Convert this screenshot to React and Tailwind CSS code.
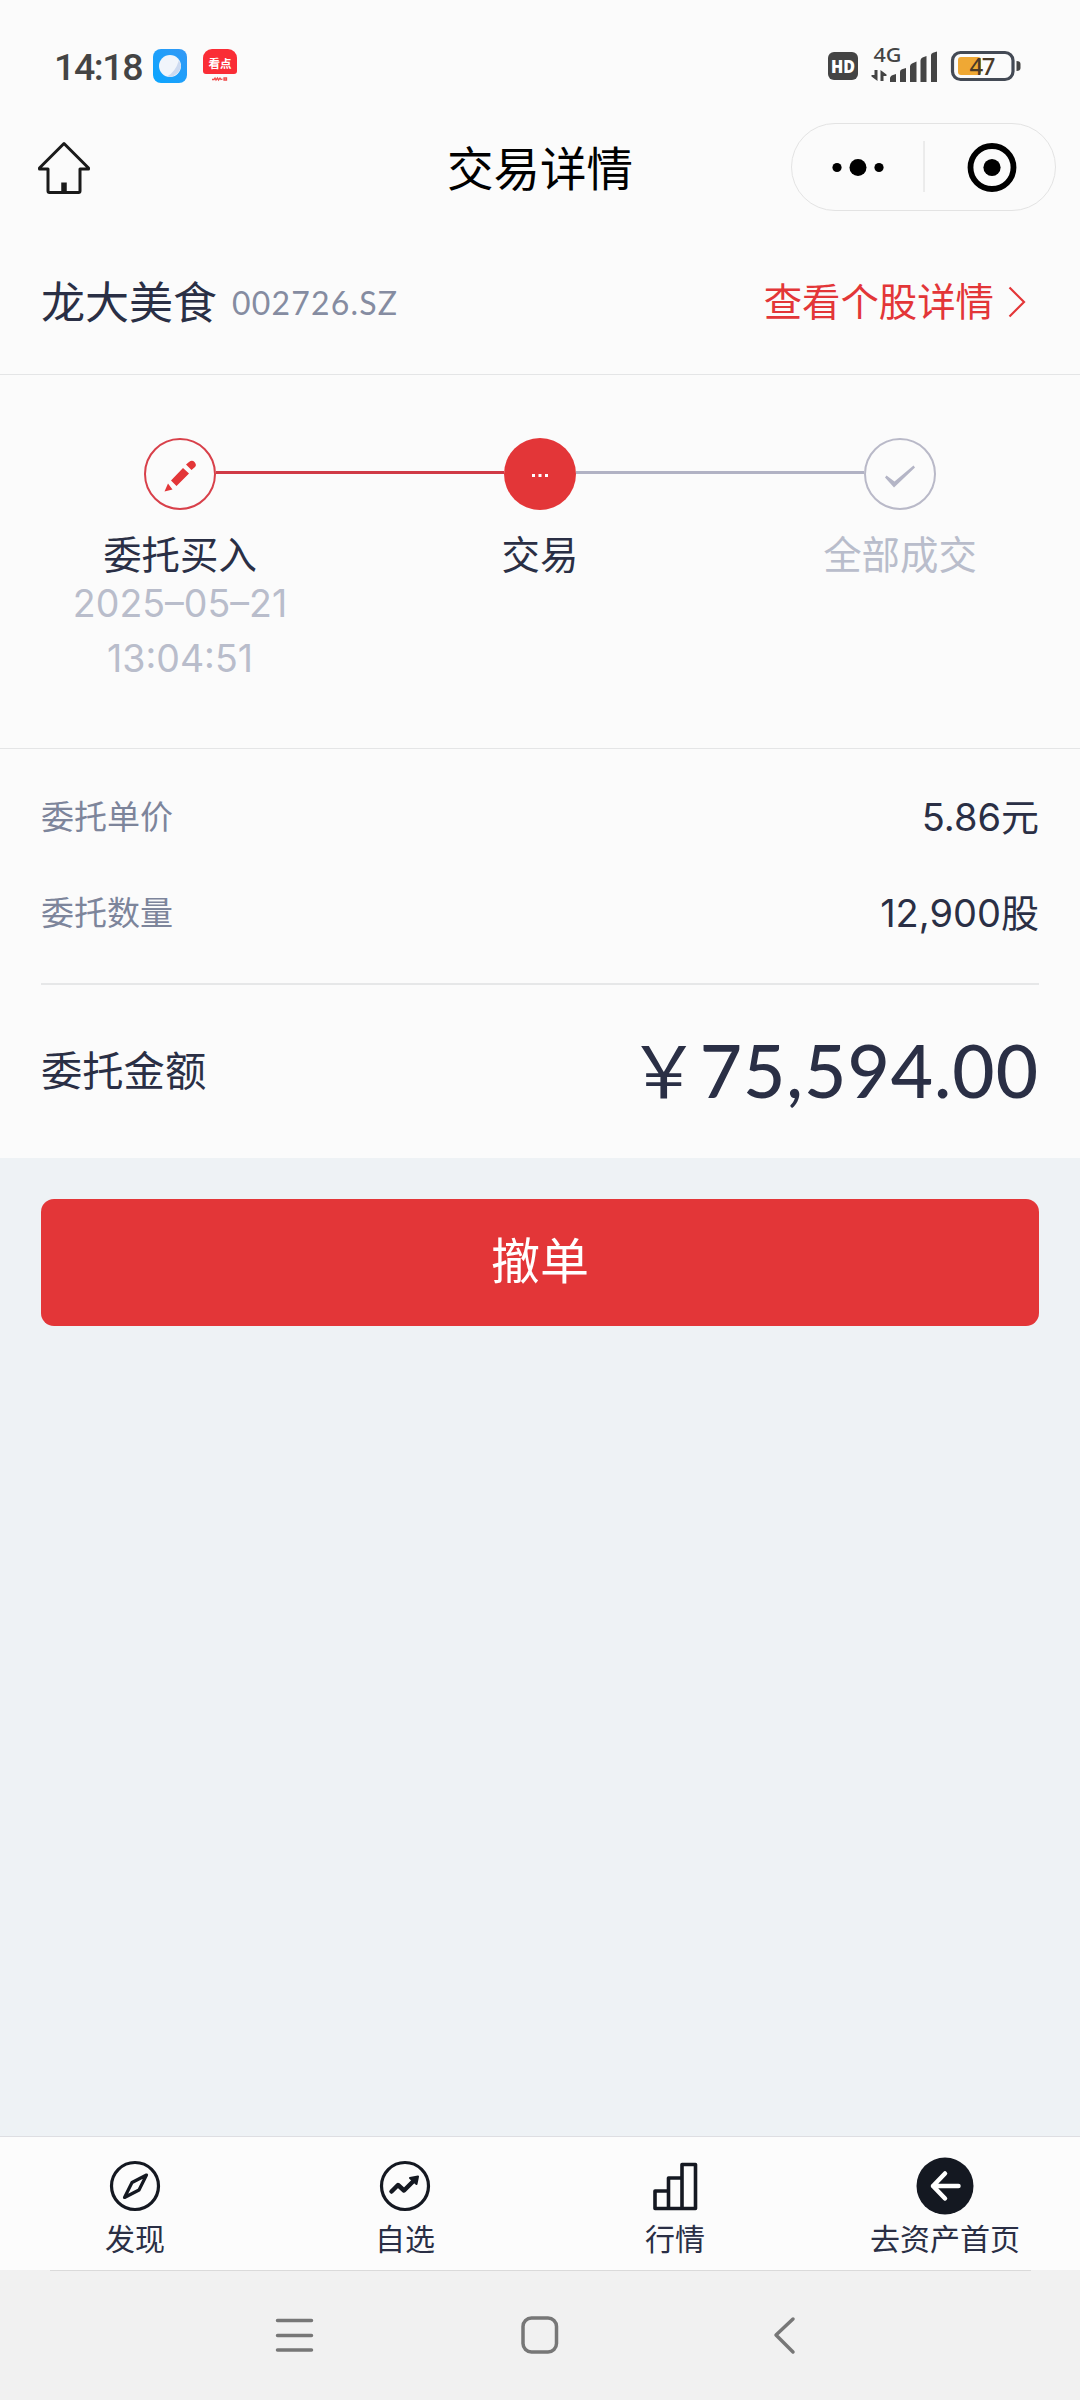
import React from "react";

const steps = [
  { label: "委托买入", time: ["2025–05–21", "13:04:51"], state: "done" },
  { label: "交易", state: "active" },
  { label: "全部成交", state: "pending" },
];

const rows = [
  { label: "委托单价", value: "5.86", unit: "元" },
  { label: "委托数量", value: "12,900", unit: "股" },
];

function StatusBar() {
  return (
    <div className="h-[112px] pl-[54px] pr-[59px] pt-[40px] flex items-start justify-between text-[#444]">
      <div className="flex items-start pt-[6px]">
        <span className="w-[99px] h-[40px] leading-[43px] text-[37.500px] font-medium tracking-[-1.400px] font-['Roboto',sans-serif] whitespace-nowrap">14:18</span>
        <svg width="34" height="34" viewBox="0 0 34 34" className="mt-[3px]">
          <defs>
            <linearGradient id="sky" x1="0" y1="1" x2="1" y2="0">
              <stop offset="0" stopColor="#0aa6ff" />
              <stop offset="1" stopColor="#3498f5" />
            </linearGradient>
          </defs>
          <rect width="34" height="34" rx="8" fill="url(#sky)" />
          <circle cx="17" cy="17" r="11" fill="#f1f5fb" />
          <path d="M26 11l2 6q-1.500 9-11 11l-3-.5Q22.500 23 26 11Z" fill="#cddaf0" />
        </svg>
        <div className="ml-[16px] mt-[3px] w-[34px] h-[34px] flex flex-col items-center">
          <div className="w-[34px] h-[25px] rounded-t-[9px] rounded-b-[3px] bg-[#fa2d36] text-white text-[11.500px] font-bold leading-[29px] text-center">看点</div>
          <svg width="16" height="6" viewBox="0 0 16 6" className="mt-[2px]">
            <path d="M0 3.500h2l1-1.500 1 2 1.500-2 1 2 1.500-2 1 1.500 1.500-.5M12 2h2.500v2H12z" fill="none" stroke="#f04a4a" strokeWidth="1.300" />
          </svg>
        </div>
      </div>
      <svg width="193" height="50" viewBox="828 40 193 50" fill="#444">
        <rect x="828" y="52" width="30" height="28" rx="6" />
        <text x="843" y="72.500" textAnchor="middle" fill="#fff" fontSize="17.500" fontWeight="800" fontFamily="Open Sans, sans-serif" textLength="24" lengthAdjust="spacingAndGlyphs">HD</text>
        <text x="873.500" y="62" fontSize="20.500" fontWeight="500" fontFamily="Noto Sans, sans-serif" textLength="28" lengthAdjust="spacingAndGlyphs">4G</text>
        <path d="M877.500 70v11l-6-4.500V75h3v-5zM880.500 70l6 4.500V76h-3v5h-3z" />
        <path d="M890 82v-3.500q0-2.500 3-3.500l3-1v8zM900 82v-10q0-2 2-2.700l4-1.300v14zM910 82V66.500q0-2 2-3l4.500-2v20.500zM920.500 82V60.500q0-2 2-3l4-1.500v26zM931 82V55q0-1.500 2-2.300l4-1.200v30.500z" />
        <rect x="952.500" y="52.500" width="60.500" height="27" rx="8" fill="none" stroke="#444a55" strokeWidth="3.200" />
        <rect x="958" y="57" width="23" height="18" rx="3" fill="#efa834" />
        <path d="M1016.500 61q4 0 4 3v4q0 3-4 3z" />
        <text x="969.500" y="75" fontSize="24" fontWeight="500" fontFamily="Noto Sans, sans-serif" textLength="26" fill="#4a3a28">47</text>
      </svg>
    </div>
  );
}

function TitleBar() {
  return (
    <div className="h-[118px] flex items-start justify-between pl-[37px] pr-[24px] text-black">
      <svg width="54" height="54" viewBox="0 0 54 54" fill="none" stroke="#1a1a1a" strokeWidth="3" strokeLinejoin="round" className="mt-[29px]">
        <path d="M27 2.500 2.500 27v1h8.500V50q0 1.500 1.500 1.500h29q1.500 0 1.500-1.500V28h8.500v-1z" />
        <path d="M27 41.500V51" strokeWidth="5.500" />
      </svg>
      <h1 className="ml-[198px] mt-[24px] leading-[60px] text-[46.500px] font-normal">交易详情</h1>
      <svg width="265" height="90" viewBox="0 0 265 90" className="mt-[10px]">
        <rect x=".5" y="1.500" width="264" height="87" rx="43.500" fill="none" stroke="#e3e3e3" />
        <path d="M133 19v51" stroke="#dcdcdc" />
        <circle cx="46" cy="45.500" r="4.600" />
        <circle cx="67" cy="45.500" r="8.500" />
        <circle cx="88" cy="45.500" r="4.600" />
        <circle cx="201" cy="45.500" r="21.500" fill="none" stroke="#000" strokeWidth="5.800" />
        <circle cx="201" cy="45.500" r="8.600" />
      </svg>
    </div>
  );
}

function StepIcon({ state }) {
  if (state === "active") {
    return (
      <svg width="72" height="72" viewBox="0 0 72 72">
        <circle cx="36" cy="36" r="36" fill="#e33638" />
        <path d="M28 37.500h3M34.500 37.500h3M41 37.500h3" stroke="#fff" strokeWidth="3" />
      </svg>
    );
  }
  const done = state === "done";
  return (
    <svg width="72" height="72" viewBox="0 0 72 72">
      <circle cx="36" cy="36" r="35" fill="#fbfbfb" stroke={done ? "#d8404a" : "#b9b9c8"} strokeWidth="2" />
      {done ? (
        <g fill="#e33638">
          <path d="M20.500 53.500l3.500-8 4.500 6zM27 42.500 39 30l6 5.500L32.500 48zM42 26.500 45 24q3-2.500 5.500 0 2.500 3 .5 5L47.500 32z" />
        </g>
      ) : (
        <path d="M22.500 37.500 21 39.500 30 49.500 51 29.500 49.500 27.500 30.500 43.500z" fill="#b4b5c6" />
      )}
    </svg>
  );
}

function Steps() {
  return (
    <div className="h-[374px] pt-[63px] flex border-b border-[#e4e5e6]">
      {steps.map((step, i) => (
        <div key={step.label} className="flex-1 flex flex-col items-center">
          <div className="w-full flex items-center">
            <span className={`flex-1 h-[3px] -mt-[3px] ${i === 0 ? "" : i === 1 ? "bg-[#d03a46]" : "bg-[#b1b2c4]"}`}></span>
            <StepIcon state={step.state} />
            <span className={`flex-1 h-[3px] -mt-[3px] ${i === 0 ? "bg-[#d03a46]" : i === 1 ? "bg-[#b1b2c4]" : ""}`}></span>
          </div>
          <div className={`mt-[14px] leading-[56px] text-[38.400px] ${step.state === "pending" ? "text-[#b9bdcb]" : "text-[#2a2f45]"}`}>{step.label}</div>
          {step.time && (
            <div className="-mt-[4px] text-center text-[37.500px] leading-[55px] text-[#b9bdcb] font-normal font-['Inter',sans-serif]">
              {step.time.map((t) => <div key={t}>{t}</div>)}
            </div>
          )}
        </div>
      ))}
    </div>
  );
}

function Order() {
  return (
    <div className="h-[409px] px-[41px] pt-[20px] text-[#2a2f45]">
      {rows.map((row) => (
        <div key={row.label} className="h-[96px] flex items-center justify-between">
          <span className="text-[33px] text-[#7d859b] -mt-[2px]">{row.label}</span>
          <span className="text-[38px] flex items-center">
            <span className="text-[38px] font-['Inter',sans-serif]">{row.value}</span>
            <span className="-mt-[6px]">{row.unit}</span>
          </span>
        </div>
      ))}
      <div className="mt-[22px] h-[2px] bg-[#e6e7e8]"></div>
      <div className="h-[172px] flex items-center justify-between">
        <span className="text-[41.300px] -mt-[5px]">委托金额</span>
        <span className="-mt-[3px] flex items-center text-[72px] leading-[80px]">
          <span className="-mt-[5px]">￥</span>
          <span className="text-[73px] tracking-[1px] font-medium font-['Lato',sans-serif]">75,594.00</span>
        </span>
      </div>
    </div>
  );
}

const tabs = [
  {
    label: "发现",
    icon: (
      <>
        <circle cx="29" cy="29" r="23.500" />
        <path d="M40.500 18 26 25.500 18.500 40.500 33 33z" />
      </>
    ),
  },
  {
    label: "自选",
    icon: (
      <>
        <circle cx="29" cy="29" r="23.500" />
        <path d="M15.500 34.500l6.500-6.500 6 5.500L37.500 24" strokeWidth="4.500" />
        <path d="M34 21l8-1.500-1.500 7.500z" fill="#141821" strokeWidth="2" />
      </>
    ),
  },
  {
    label: "行情",
    icon: (
      <path d="M9 34h13.500v17.500H9zM22.500 21H36v30.500H22.500zM36 7.500h13.500v44H36z" strokeWidth="3.600" />
    ),
  },
  {
    label: "去资产首页",
    icon: (
      <>
        <circle cx="29" cy="29" r="28.500" fill="#141821" stroke="none" />
        <path d="M29 16.500 17 29l12 12.500M17 29h25.500" stroke="#fff" strokeWidth="4.500" />
      </>
    ),
  },
];

function TabBar() {
  return (
    <div className="h-[134px] bg-[#fcfcfc] border-t border-[#dedee2] flex">
      {tabs.map((tab) => (
        <div key={tab.label} className="flex-1 flex flex-col items-center pt-[20px] text-[#2a2f45]">
          <svg width="58" height="58" viewBox="0 0 58 58" fill="none" stroke="#141821" strokeWidth="3.200" strokeLinejoin="round" strokeLinecap="round">
            {tab.icon}
          </svg>
          <span className="mt-[2px] text-[30px] leading-[40px]">{tab.label}</span>
        </div>
      ))}
    </div>
  );
}

function SystemNav() {
  return (
    <div className="h-[130px] bg-[#f1f1f1] flex flex-col items-center">
      <div className="w-[981px] h-px bg-[#dadada]"></div>
      <svg width="540" height="60" viewBox="0 0 540 60" fill="none" stroke="#777" strokeWidth="3.500" strokeLinecap="round" strokeLinejoin="round" className="mt-[34px]">
        <path d="M7.500 15.500h34M7.500 30.500h34M7.500 45h34" />
        <rect x="253" y="13" width="33.500" height="34" rx="8.500" />
        <path d="M523 14 506 30l17 17" />
      </svg>
    </div>
  );
}

export default function App() {
  return (
    <div className="w-[1080px] h-[2400px] flex flex-col bg-[#fbfbfb] overflow-hidden font-['Noto_Sans_CJK_SC',sans-serif]">
      <StatusBar />
      <TitleBar />
      <div className="h-[145px] pl-[41px] pr-[54px] pb-[4px] flex items-center justify-between border-b border-[#e4e5e6]">
        <div className="flex items-center text-[#2a2f45] text-[44px]">
          龙大美食
          <span className="ml-[15px] mt-[5px] text-[32px] tracking-[1.200px] text-[#858ca1] font-['Lato',sans-serif]">002726.SZ</span>
        </div>
        <div className="flex items-center gap-[14px] text-[#e33638] text-[38.400px]">
          查看个股详情
          <svg width="18" height="32" viewBox="0 0 18 32" fill="none" stroke="#e33638" strokeWidth="2.200" className="mt-[4px]">
            <path d="M1.500 1.500 16 16 1.500 30.500" />
          </svg>
        </div>
      </div>
      <Steps />
      <Order />
      <div className="flex-1 bg-[#eef2f5] px-[41px] pt-[41px]">
        <button className="w-full h-[127px] pb-[9px] rounded-[13px] bg-[#e33638] text-white text-[49px]">撤单</button>
      </div>
      <TabBar />
      <SystemNav />
    </div>
  );
}
